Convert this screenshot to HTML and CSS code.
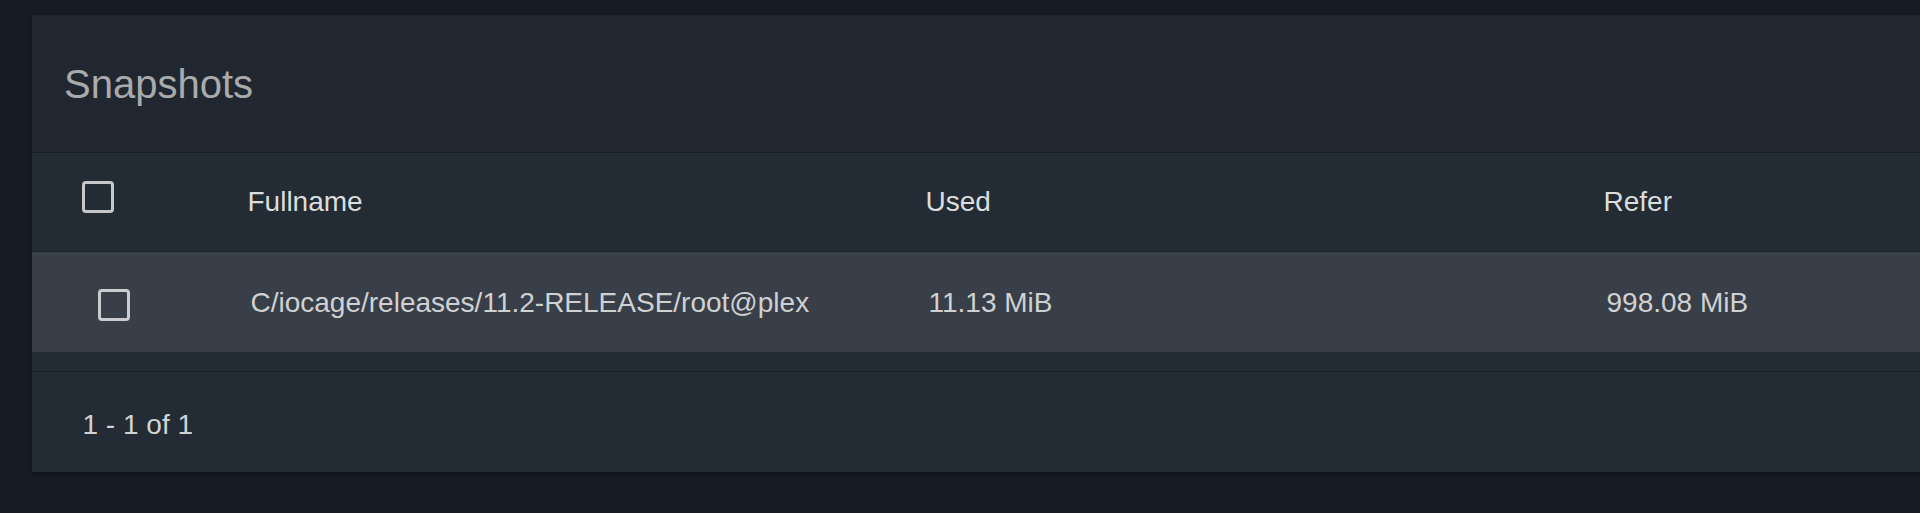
FILE: index.html
```html
<!DOCTYPE html>
<html lang="en">
<head>
<meta charset="utf-8">
<title>Snapshots</title>
<link rel="stylesheet" href="styles.css">
</head>
<body>
<div class="card">
  <div class="card-title">Snapshots</div>
  <div class="table">
    <div class="row head">
      <div class="cell check"><span class="box head-box"></span></div>
      <div class="cell">Fullname</div>
      <div class="cell">Used</div>
      <div class="cell">Refer</div>
      <div class="cell"></div>
    </div>
    <div class="row data">
      <div class="cell check"><span class="box row-box"></span></div>
      <div class="cell">C/iocage/releases/11.2-RELEASE/root@plex</div>
      <div class="cell">11.13 MiB</div>
      <div class="cell">998.08 MiB</div>
      <div class="cell"></div>
    </div>
    <div class="spacer"></div>
  </div>
  <div class="footer">1 - 1 of 1</div>
</div>
</body>
</html>
```

FILE: styles.css
```css
html, body {
  margin: 0;
  padding: 0;
  background: #161c25;
  overflow: hidden;
}
body {
  padding: 15px 0 0 32px;
  font-family: "Liberation Sans", Arial, sans-serif;
  height: 513px;
  box-sizing: border-box;
}
.card {
  width: 2100px;
  background: #202730;
  box-shadow: 0 2px 4px rgba(0, 0, 0, 0.35);
}
.card-title {
  height: 137px;
  display: flex;
  align-items: center;
  padding-left: 32px;
  font-size: 40px;
  line-height: 40px;
  color: #a9aaab;
  border-bottom: 1px solid #191e26;
}
.table {
  background: #232b34;
}
.row {
  display: grid;
  grid-template-columns: 214px 678px 678px 678px 1fr;
  align-items: center;
}
.head {
  height: 98px;
  border-bottom: 1px solid #1c222a;
  color: #dcdddd;
  font-size: 28px;
}
.head .cell {
  padding-left: 1.5px;
}
.data {
  height: 100px;
  background: #383f48;
  color: #d0d1d2;
  font-size: 28px;
}
.data .cell {
  padding-left: 4.5px;
  padding-top: 2px;
}
.cell.check {
  display: flex;
  align-items: center;
}
.head .cell.check,
.data .cell.check {
  padding-left: 0;
  padding-top: 0;
}
.box {
  display: block;
  width: 32px;
  height: 32px;
  box-sizing: border-box;
  border: 3.5px solid #c6c7c8;
  border-radius: 4px;
}
.head-box {
  margin-left: 50px;
  margin-bottom: 10px;
}
.row-box {
  margin-left: 66px;
  margin-top: 6px;
  border-color: #cbcccd;
}
.spacer {
  height: 19px;
  border-bottom: 1px solid #191e26;
}
.footer {
  height: 100px;
  box-sizing: border-box;
  display: flex;
  align-items: center;
  padding: 5px 0 0 50.5px;
  background: #232b34;
  color: #d2d3d4;
  font-size: 28px;
}
```
